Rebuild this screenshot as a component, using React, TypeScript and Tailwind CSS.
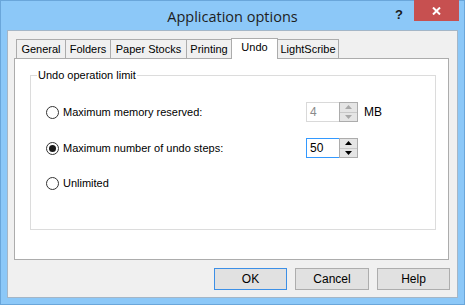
import React from 'react';

const tabs = [
  { label: 'General', w: 'w-[50px]' },
  { label: 'Folders', w: 'w-[46px]' },
  { label: 'Paper Stocks', w: 'w-[77px]' },
  { label: 'Printing', w: 'w-[46px]' },
  { label: 'Undo', w: 'w-[47px]', active: true },
  { label: 'LightScribe', w: 'w-[62px]' },
];

const Arrow = ({ up, color }: { up?: boolean; color: string }) => (
  <svg width="7" height="4" viewBox="0 0 7 4">
    <path d={up ? 'M0 4 L3.5 0 L7 4 Z' : 'M0 0 L3.5 4 L7 0 Z'} fill={color} />
  </svg>
);

const Spin = ({ value, disabled }: { value: string; disabled?: boolean }) => (
  <div className="flex h-[20px]">
    <div
      className={
        disabled
          ? 'w-[34px] border border-[#d9d9d9] bg-white text-[#8a8a8a] pl-[3px] text-[12px] leading-[18px]'
          : 'w-[34px] border border-[#3399ff] bg-white text-black pl-[3px] text-[12px] leading-[18px]'
      }
    >
      {value}
    </div>
    <div className="-ml-px w-[19px] border border-[#acacac] bg-[#e5e5e5] flex flex-col">
      <div className="flex-1 flex items-center justify-center border-b border-[#c8c8c8]">
        <Arrow up color={disabled ? '#a8a8a8' : '#000'} />
      </div>
      <div className="flex-1 flex items-center justify-center">
        <Arrow color={disabled ? '#a8a8a8' : '#000'} />
      </div>
    </div>
  </div>
);

const Radio = ({ checked }: { checked?: boolean }) => (
  <div className="w-[13px] h-[13px] rounded-full border border-[#333] bg-white flex items-center justify-center">
    {checked && <div className="w-[7px] h-[7px] rounded-full bg-[#1a1a1a]" />}
  </div>
);

const App: React.FC = () => {
  return (
    <div className="relative w-[465px] h-[305px] bg-[#8cc8f8] border border-[#6aa6da] flex flex-col font-['Liberation_Sans',Arial,sans-serif] text-[11px] text-black select-none">
      {/* Title bar */}
      <div className="h-[29px] flex items-center justify-center">
        <span className="font-['Open_Sans',sans-serif] text-[14.5px] text-[#1e1e1e] mt-[2px]">Application options</span>
      </div>
      <div className="absolute top-[4px] right-[61px] font-['Liberation_Sans',sans-serif] font-bold text-[13px] text-[#1a1a1a]">?</div>
      <div className="absolute top-[-1px] right-[5px] w-[45px] h-[21px] bg-[#c75050] flex items-center justify-center">
        <svg width="9" height="8" viewBox="0 0 9 8">
          <path d="M1 0.5 L8 7.5 M8 0.5 L1 7.5" stroke="#fff" strokeWidth="2" />
        </svg>
      </div>

      {/* Client area */}
      <div className="mx-[6px] mb-[6px] flex-1 border border-[#a4b6c7] bg-[#f0f0f0] flex flex-col pt-[7px]">
        {/* Tabs */}
        <div className="relative z-10 flex items-end h-[20px] ml-[8px]">
          {tabs.map((t, i) =>
            t.active ? (
              <div
                key={t.label}
                className={`${t.w} ${i ? '-ml-px' : ''} h-[21px] -mb-px bg-white border border-b-0 border-[#acacac] flex justify-center pt-[2px] leading-[13px]`}
              >
                {t.label}
              </div>
            ) : (
              <div
                key={t.label}
                className={`${t.w} ${i ? '-ml-px' : ''} h-[19px] bg-[#f0f0f0] border border-b-0 border-[#acacac] flex justify-center pt-[3px] leading-[13px]`}
              >
                {t.label}
              </div>
            )
          )}
        </div>

        {/* Panel */}
        <div className="ml-[6px] mr-[8px] h-[202px] bg-white border border-[#acacac] flex flex-col">
          <fieldset className="mt-[10px] ml-[15px] mr-[12px] h-[161px] border border-[#dcdcdc]">
            <legend className="ml-[6px] px-[1px] leading-[13px]">Undo operation limit</legend>
            <div className="flex flex-col pl-[15px]">
              <div className="mt-[20px] h-[20px] flex items-center">
                <div className="w-[260px] flex items-center gap-[4px]">
                  <Radio />
                  <span>Maximum memory reserved:</span>
                </div>
                <Spin value="4" disabled />
                <span className="ml-[6px] text-[12px]">MB</span>
              </div>
              <div className="mt-[16px] h-[20px] flex items-center">
                <div className="w-[260px] flex items-center gap-[4px]">
                  <Radio checked />
                  <span>Maximum number of undo steps:</span>
                </div>
                <Spin value="50" />
              </div>
              <div className="mt-[15px] h-[20px] flex items-center">
                <div className="w-[260px] flex items-center gap-[4px]">
                  <Radio />
                  <span>Unlimited</span>
                </div>
              </div>
            </div>
          </fieldset>
        </div>

        {/* Buttons */}
        <div className="mt-[8px] mr-[7px] flex justify-end gap-[8px] text-[12px]">
          <button className="w-[73px] h-[22px] bg-[#e1e1e1] border border-[#3c8fe6]">OK</button>
          <button className="w-[74px] h-[22px] bg-[#e1e1e1] border border-[#adadad]">Cancel</button>
          <button className="w-[73px] h-[22px] bg-[#e1e1e1] border border-[#adadad]">Help</button>
        </div>
      </div>
    </div>
  );
};

export default App;
